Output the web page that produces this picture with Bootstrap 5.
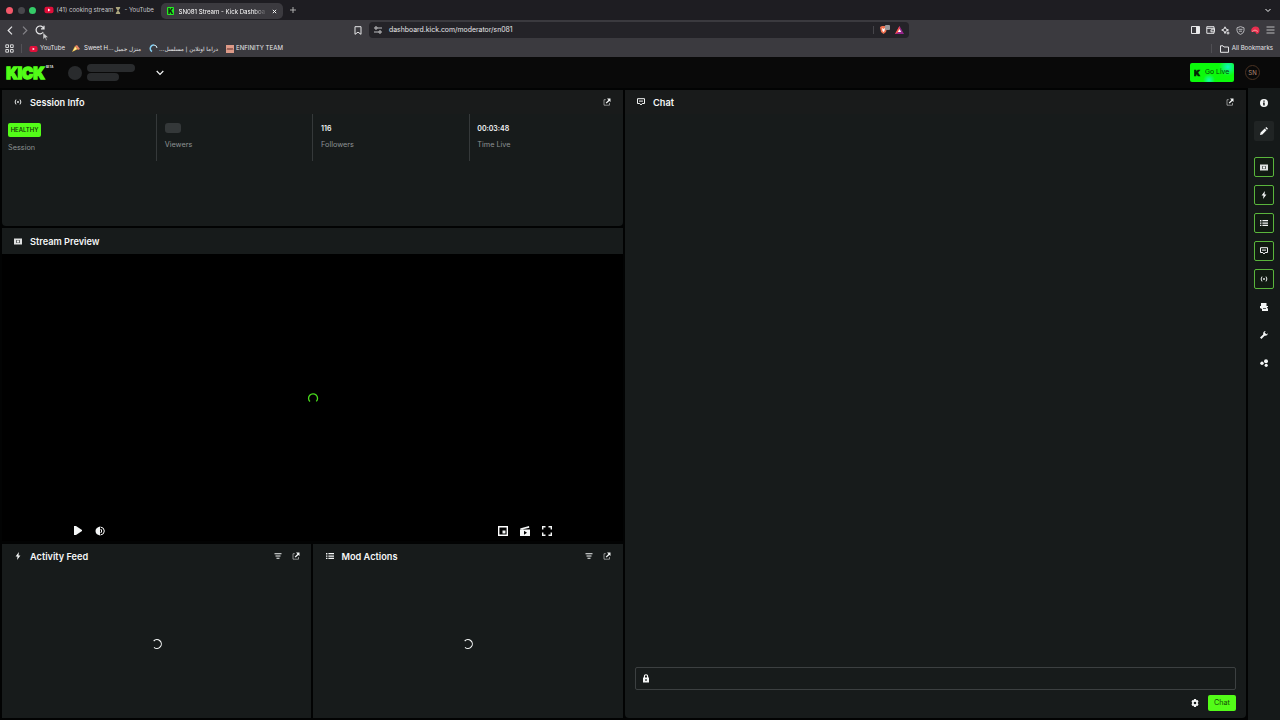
<!DOCTYPE html>
<html lang="en" data-bs-theme="dark">
<head>
<meta charset="utf-8">
<meta name="viewport" content="width=device-width, initial-scale=1">
<title>SN081 Stream - Kick Dashboard</title>
<link href="https://cdn.jsdelivr.net/npm/bootstrap@5.3.0/dist/css/bootstrap.min.css" rel="stylesheet">
<style>
body{width:1280px;height:720px;overflow:hidden;background:#020303;color:#f4f6f6;font:400 7px/1 Inter,"DejaVu Sans",sans-serif}
svg{display:block;flex:none;fill:currentColor}
.ln{fill:none;stroke:currentColor}
.txt{white-space:nowrap;flex:none}
.tabs{height:20px;background:#1e1d22;padding-left:6px}
.dot{width:7px;height:7px;margin-right:4.5px;flex:none}
.tab-on{width:122px;height:16px;margin-top:2px;background:#3b3a3f;border-radius:5px;padding:0 6px;flex:none}
.tab-name{width:88px;line-height:9px;margin-left:4px;font-size:6.1px;overflow:hidden;-webkit-mask-image:linear-gradient(90deg,#000 85%,transparent)}
.tools{height:37px;background:#3b3a3f;color:#e6e6e8}
.tools-nav{height:20px;padding:0 5px 0 6px}
.marks{height:17px;padding:0 7px 0 5px;font-size:6.1px}
.marks .arab{font:5.7px "DejaVu Sans",sans-serif}
.addr{width:540px;height:16px;background:#242328;border-radius:4px;padding:0 5px;margin-left:7px}
.kickbar{height:31px;background:#090909;padding:0 20px 0 5px}
.skel{background:#292b2d}
.golive{width:44px;height:19px;border-radius:2px;color:#063b06;background:radial-gradient(circle at 19px 17px,#13f7b0 0,transparent 6px),radial-gradient(circle at 38px 4px,#10f5c0 0,transparent 9px),#0bfa0b;padding-left:4px}
.avatar{width:15px;height:15px;border:1px solid #4a3222;color:#b58c76;font-size:6px}
.work{height:632px;padding:2px 0 2px 2px}
.pane{background:#171b1b}
.pane-top{height:24px;padding:0 12px;flex:none}
.pane-top .ttl{font-weight:600;font-size:9.2px;margin-left:8px;padding-top:1px}
.stats>div{width:156.3px;flex:none;height:47px;padding-left:7.7px;border-right:1px solid #35393a}
.stats>div:first-child{width:155px;padding-left:6px}
.stats>div:last-child{border:0;width:153px}
.stats b{font-size:7px;font-weight:600;display:block;height:8px;margin-top:11px}
.stats span.lab{display:block;font-size:7.3px;color:#8d9293;margin-top:7.5px}
.healthy{width:33px;height:14px;margin-top:8.5px;background:#53fc18;color:#102b08;border-radius:2px;font-size:6px;font-weight:500}
.inputbox{height:23px;border:1px solid #3c4041;border-radius:2px;padding-left:6px;margin:0 10px}
.sendbtn{width:28px;height:16px;background:#53fc18;color:#154a08;border-radius:2px;font-size:7.2px}
.rail{width:32px;background:#151919;margin-top:-2px;margin-bottom:-2px;padding-top:5px}
.rail .cell{width:20px;height:20px;border-radius:2px;margin-bottom:8px}
.rail .on{border:1px solid #5ab53c;background:#111a12}
.cursor-arrow{position:absolute;left:42px;top:12px}
</style>
</head>
<body class="d-flex flex-column">
<svg class="d-none">
 <symbol id="pop" viewBox="0 0 8 8"><path d="M4 .5h3.500V4L6.400 2.900 3.600 5.600l-.9-.9 2.700-2.800z"/><path d="M2.800 1.700H1v5.500h5.500V5" fill="none" stroke="currentColor" stroke-width=".8" opacity=".65"/></symbol>
 <symbol id="live" viewBox="0 0 10 8"><circle cx="5" cy="4" r="1.100"/><path d="M2.500 1Q.2 4 2.500 7M7.500 1q2.300 3 0 6" fill="none" stroke="currentColor" stroke-width="1.200"/></symbol>
 <symbol id="film" viewBox="0 0 8 7"><path fill-rule="evenodd" d="M0 .5h8v6H0zM2 2v3h4V2z" opacity=".9"/><path d="M3 2.600h2v1.800H3z"/><path d="M2 2h4v3H2z" opacity=".35"/></symbol>
 <symbol id="talk" viewBox="0 0 8 8"><path d="M.5.700h7v4.800H5.200L4 7 2.800 5.500H.5z" fill="none" stroke="currentColor"/><path d="M2 2.600h4v1H2z"/></symbol>
 <symbol id="bolt" viewBox="0 0 8 8"><path d="M4.900 0 1.600 4.400h1.900L3.100 8l3.300-4.600H4.500z"/></symbol>
 <symbol id="list" viewBox="0 0 8 8"><path d="M0 1h1.400v1.400H0zM2.400 1H8v1.300H2.400zM0 3.400h1.400v1.300H0zM2.400 3.400H8v1.300H2.400zM0 5.800h1.400v1.300H0zM2.400 5.800H8v1.300H2.400z"/></symbol>
 <symbol id="sift" viewBox="0 0 8 8"><path d="M.5 1.200h7v1h-7zM1.500 3.500h5v1h-5zM2.500 5.800h3v1h-3z"/></symbol>
 <symbol id="yt" viewBox="0 0 10 8"><rect width="9" height="6.500" x=".5" y=".75" rx="2" fill="#e00f3a"/><path d="M4 2.500v3L6.500 4z" fill="#fff"/></symbol>
</svg>

<div class="tabs d-flex align-items-center">
 <span class="dot rounded-circle" style="background:#f4586a"></span><span class="dot rounded-circle" style="background:#48474c"></span><span class="dot rounded-circle" style="background:#35cb68"></span>
 <svg width="10" height="8" style="margin-left:3px"><use href="#yt"/></svg>
 <span class="txt d-flex align-items-center" style="width:104px;margin-left:3px;padding-top:1px;font-size:6.100px;color:#c7c7ca">(41) cooking stream
  <svg width="6" height="7" viewBox="0 0 7 8" style="margin:0 3px 0 2px"><path d="M1 0h5v1L4 4l2 3v1H1V7l2-3-2-3z" fill="#aaa47c"/></svg>- YouTube</span>
 <div class="tab-on d-flex align-items-center">
  <svg width="8" height="8" viewBox="0 0 8 8"><rect width="7" height="8" rx="1" fill="#24ef22"/><text x="1" y="6.600" font-size="7" font-weight="900" fill="#102210">K</text></svg>
  <span class="txt tab-name text-white">SN081 Stream - Kick Dashboa</span>
  <svg class="ln" width="5" height="5" viewBox="0 0 6 6" style="margin-left:5px"><path d="M1 1l4 4M5 1 1 5" stroke-width="1.200"/></svg>
 </div>
 <svg class="ln" width="6" height="6" viewBox="0 0 6 6" style="margin-left:7px"><path d="M3 0v6M0 3h6" stroke="#bbb" stroke-width=".9"/></svg>
 <svg class="ln ms-auto" width="6" height="5" viewBox="0 0 6 5" style="margin-right:9px"><path d="m.5 1 2.500 2.500L5.500 1"/></svg>
</div>

<div class="tools position-relative">
 <div class="tools-nav d-flex align-items-center">
  <svg class="ln" width="8" height="9" viewBox="0 0 8 9"><path d="M6 .7 2.200 4.500 6 8.300" stroke-width="1.200"/></svg>
  <svg class="ln" width="8" height="9" viewBox="0 0 8 9" style="margin-left:7px;color:#858489"><path d="M2 .7 5.800 4.500 2 8.300" stroke-width="1.200"/></svg>
  <svg class="ln" width="10" height="10" viewBox="0 0 10 10" style="margin-left:6px"><path d="M8.300 7A3.900 3.900 0 1 1 8.600 3.400M9 .8v3H6" stroke-width="1.200"/></svg>
  <svg class="ln" width="8" height="9" viewBox="0 0 8 9" style="margin-left:309px"><path d="M1 .7h6v7.600L4 6.200 1 8.300z"/></svg>
  <div class="addr d-flex align-items-center">
   <svg class="ln" width="8" height="8" viewBox="0 0 8 8"><path d="M3.500 2H8M0 6h4.500" stroke-width=".8"/><circle cx="2" cy="2" r="1.200" stroke-width=".9"/><circle cx="6" cy="6" r="1.200" stroke-width=".9"/></svg>
   <span class="txt" style="margin-left:7px;padding-top:1px;font-size:6.900px">dashboard.kick.com/moderator/sn081</span>
   <span class="ms-auto" style="width:1px;height:8px;background:#46454a"></span>
   <svg width="11" height="10" viewBox="0 0 11 10" style="margin-left:5px"><path d="M1 2 3 1h3l2 2-1 4-2.500 2L2 7z" fill="#ee704f"/><path d="m3 3 1.500 1L6 3 5.500 6l-1 1-1-1z" fill="#fff"/><rect x="6" width="5" height="5" rx="1" fill="#98999c"/></svg>
   <svg width="9" height="8" viewBox="0 0 9 8" style="margin-left:5px"><path d="M4.500 0 9 8H0z" fill="#98258c"/><path d="M4.500 0 0 8l4.500-2.500z" fill="#ff563e"/><path d="m4.500 3 1.700 3H2.800z" fill="#fff"/></svg>
  </div>
  <div class="ms-auto d-flex align-items-center" style="gap:6px">
   <svg class="ln" width="9" height="8" viewBox="0 0 9 8"><path d="M.5.500h8v7h-8z"/><path d="M5.500 1H8v6H5.500z" fill="#eee"/></svg>
   <svg class="ln" width="9" height="8" viewBox="0 0 9 8"><path d="M8 2.500V.7H.8v6.600H8V6M.8 2.300h7.700v3.500H5V3.800h3.500"/></svg>
   <svg class="ln" width="9" height="9" viewBox="0 0 9 9"><path d="M4 .8 5 3l2.500 1L5 5 4 7.500 3 5 .7 4 3 3zM7 5.500v3M5.500 7h3"/></svg>
   <svg class="ln" width="9" height="9" viewBox="0 0 9 9"><path d="M4.500.6 8 1.800v3Q7.500 7.500 4.500 8.400 1.500 7.500 1 4.800v-3z" stroke="#b6b6ba"/><path d="M2.500 3.300h4M3 5.200h3" stroke="#b6b6ba"/></svg>
   <svg width="9" height="9" viewBox="0 0 9 9"><path d="M.5 6A4 4 0 0 1 4.500.5Q8.700.7 8.500 5 8 8 5.500 8 5 5 .5 6" fill="#e82f4f"/><path d="M1 5.500q3-3 6 0" stroke="#ffb4ac" stroke-width=".8" fill="none"/></svg>
   <svg class="ln" width="9" height="8" viewBox="0 0 9 8"><path d="M.5 1h8M.5 4h8M.5 7h8" stroke="#b9b9bc" stroke-width="1.200"/></svg>
  </div>
 </div>
 <div class="marks d-flex align-items-center">
  <svg class="ln" width="9" height="9" viewBox="0 0 9 9"><path d="M.8.800h2.700v2.700H.8zM5.500.800h2.700v2.700H5.500zM.8 5.500h2.700v2.700H.8zM5.500 5.500h2.700v2.700H5.500z" stroke-width=".9"/></svg>
  <span style="width:1px;height:9px;background:#535257;margin-left:7px"></span>
  <svg width="9" height="8" viewBox="0 0 10 8" style="margin-left:7px"><use href="#yt"/></svg>
  <span class="txt" style="margin-left:2px;width:32px">YouTube</span>
  <svg width="9" height="9" viewBox="0 0 9 9"><path d="M0 8 3 2l3 3z" fill="#f1c044"/><path d="m3 2 2-1 3 4-2 1z" fill="#e98563"/><path d="M1 7 3.500 3l1 2z" fill="#fff0a5"/></svg>
  <span class="txt" style="margin-left:3px;width:30px">Sweet H...</span>
  <span class="txt arab" dir="rtl" style="width:27px">منزل جميل</span>
  <svg class="ln" width="9" height="9" viewBox="0 0 9 9" style="margin-left:8px"><path d="M5 1A3.500 3.500 0 0 0 3 7.500" stroke="#84cdf0" stroke-width="1.500"/><path d="M5 1q3 .5 3 3" stroke="#d6eff7"/></svg>
  <span class="txt arab" dir="rtl" style="margin-left:5px;width:55px">دراما اونلاين | مسلسل...</span>
  <svg width="8" height="8" viewBox="0 0 8 8" style="margin-left:8px"><rect width="8" height="8" fill="#de9a88"/><path d="m1 5 1-2 1 2 1-2 1 2 1-2 1 2" fill="none" stroke="#713c37" stroke-width=".7"/></svg>
  <span class="txt" style="margin-left:2px">ENFINITY TEAM</span>
  <span class="ms-auto" style="width:1px;height:9px;background:#504f54"></span>
  <svg class="ln" width="9" height="8" viewBox="0 0 9 8" style="margin-left:8px"><path d="M.5 7.300V.8H3l1 1.200h4.500v5.300z"/></svg>
  <span class="txt" style="margin-left:3px">All Bookmarks</span>
 </div>
 <svg class="cursor-arrow" width="7" height="9" viewBox="0 0 7 9"><path d="M1 .5v7l2-1.700 1 2.700 1.200-.5-1-2.500h2.300z" fill="#c9c9cb" stroke="#303033" stroke-width=".5"/></svg>
</div>

<div class="kickbar d-flex align-items-center">
 <svg width="41" height="18" viewBox="0 0 41 18"><text x="1.300" y="15" font-family="Inter" font-weight="900" font-size="16.500" fill="#53fc18" stroke="#53fc18" stroke-width="1.500" textLength="38.500" lengthAdjust="spacingAndGlyphs">KICK</text></svg>
 <span class="txt fw-bold" style="font-size:2.800px;width:9px;margin-top:-11px">BETA</span>
 <span class="skel rounded-circle flex-shrink-0" style="width:14px;height:14px;margin-left:13px"></span>
 <div style="width:48px;margin-left:5px"><div class="skel rounded-pill" style="height:8px;margin-bottom:1.500px"></div><div class="skel rounded-pill" style="height:8px;width:32px"></div></div>
 <svg class="ln" width="8" height="6" viewBox="0 0 8 6" style="margin-left:21px"><path d="m.7 1 3.300 3.500L7.300 1" stroke-width="1.200"/></svg>
 <div class="golive ms-auto d-flex align-items-center"><svg width="7" height="8" viewBox="0 0 7 8"><text y="7" font-size="8" font-weight="900" fill="#042204" stroke="#042204" stroke-width=".6">K</text></svg><span class="txt" style="margin-left:4px;font-size:6.800px">Go Live</span></div>
 <span class="avatar rounded-circle d-flex align-items-center justify-content-center" style="margin-left:11px">SN</span>
</div>

<main class="work d-flex">
 <div class="d-flex flex-column" style="width:621px">
  <section class="pane rounded-1" style="height:136px;margin-bottom:2px">
   <div class="pane-top d-flex align-items-center" style="background:#191b1b"><svg width="8" height="8"><use href="#live"/></svg><span class="ttl">Session Info</span><svg class="ms-auto" width="8" height="8"><use href="#pop"/></svg></div>
   <div class="stats d-flex">
    <div><div class="healthy d-flex align-items-center justify-content-center">HEALTHY</div><span class="lab" style="margin-top:7px">Session</span></div>
    <div><div style="width:16px;height:10px;border-radius:3px;background:#343839;margin-top:9px"></div><span class="lab">Viewers</span></div>
    <div><b>116</b><span class="lab">Followers</span></div>
    <div><b>00:03:48</b><span class="lab">Time Live</span></div>
   </div>
  </section>
  <section class="bg-black" style="height:313px;margin-bottom:3px">
   <div class="pane pane-top d-flex align-items-center" style="height:26px"><svg width="8" height="7"><use href="#film"/></svg><span class="ttl">Stream Preview</span></div>
   <div class="d-flex justify-content-center" style="height:270px;padding-top:137.500px"><svg class="ln" width="12" height="12" viewBox="0 0 12 12"><path d="M3 9.600A4.500 4.500 0 1 1 9.300 9.400" stroke="#48dc1c" stroke-width="1.300"/></svg></div>
   <div class="d-flex align-items-center" style="height:13px;padding:0 71px 0 72px">
    <svg width="8" height="9" viewBox="0 0 8 9"><path d="M0 0h2l6 4v1L2 9H0z"/></svg>
    <svg width="10" height="10" viewBox="0 0 10 10" style="margin-left:13px"><path d="M5 .5v9Q.5 8.500.5 5T5 .5z"/><path d="M5.500 1q3.800.5 3.800 4T5.500 9M5.800 3q1.800 2 0 4" fill="none" stroke="#fff"/></svg>
    <svg class="ms-auto" width="10" height="10" viewBox="0 0 10 10"><path d="M.7.700h8.600v8.600H.7z" fill="none" stroke="#fff" stroke-width="1.400"/><path d="M4.500 4.500h3v3h-3z"/></svg>
    <svg width="10" height="10" viewBox="0 0 10 10" style="margin-left:12px"><path fill-rule="evenodd" d="M0 3.500h10V10H0zm4 1.300v4l3-2zM0 2.500 9 .1l.3 1.600L1 3.800z"/></svg>
    <svg class="ln" width="10" height="10" viewBox="0 0 10 10" style="margin-left:12px"><path d="M.7 3.500V.7h2.800M6.500.7h2.800v2.800M9.300 6.500v2.800H6.500M3.500 9.300H.7V6.500" stroke-width="1.400"/></svg>
   </div>
  </section>
  <div class="d-flex" style="height:174px;gap:2px">
   <section class="pane d-flex flex-column" style="width:309px"><div class="pane-top d-flex align-items-center" style="padding-right:11px"><svg width="8" height="8"><use href="#bolt"/></svg><span class="ttl">Activity Feed</span><svg class="ms-auto" width="8" height="8"><use href="#sift"/></svg><svg width="8" height="8" style="margin-left:10px"><use href="#pop"/></svg></div>
    <div class="d-flex justify-content-center" style="padding-top:70px"><svg class="ln" width="12" height="12" viewBox="0 0 12 12"><path d="M2.700 3A4.400 4.400 0 1 1 3 9.300" stroke-width="1.100"/></svg></div></section>
   <section class="pane d-flex flex-column" style="width:310px"><div class="pane-top d-flex align-items-center"><svg width="8" height="8" style="margin-left:.5px"><use href="#list"/></svg><span class="ttl">Mod Actions</span><svg class="ms-auto" width="8" height="8"><use href="#sift"/></svg><svg width="8" height="8" style="margin-left:10px"><use href="#pop"/></svg></div>
    <div class="d-flex justify-content-center" style="padding-top:70px"><svg class="ln" width="12" height="12" viewBox="0 0 12 12"><path d="M2.700 3A4.400 4.400 0 1 1 3 9.300" stroke-width="1.100"/></svg></div></section>
  </div>
 </div>
 <section class="pane rounded-1 d-flex flex-column" style="width:621px;margin-left:2px">
  <div class="pane-top d-flex align-items-center" style="background:#191b1b"><svg width="8" height="8"><use href="#talk"/></svg><span class="ttl">Chat</span><svg class="ms-auto" width="8" height="8"><use href="#pop"/></svg></div>
  <div class="mt-auto inputbox d-flex align-items-center"><svg width="8" height="9" viewBox="0 0 8 9"><path fill-rule="evenodd" d="M1 3.500h6V8.500H1zM3.400 5v2h1.200V5z"/><path d="M2.400 4V2.400q0-1.600 1.600-1.600t1.600 1.600V4" fill="none" stroke="#fff" stroke-width="1.100"/></svg></div>
  <div class="d-flex align-items-center justify-content-end" style="height:28px;padding:0 10px 2px;gap:9px">
   <svg width="8" height="8" viewBox="0 0 8 8"><path fill-rule="evenodd" d="M3 0h2l.3 1.200 1.200-.3 1 1.700L6.700 4l.8 1.400-1 1.700-1.200-.3L5 8H3l-.3-1.200-1.200.3-1-1.700L1.300 4 .5 2.600l1-1.700 1.200.3zM4 2.700a1.300 1.300 0 1 0 0 2.600 1.300 1.300 0 0 0 0-2.600z"/></svg>
   <span class="sendbtn d-flex align-items-center justify-content-center">Chat</span>
  </div>
 </section>
 <aside class="rail d-flex flex-column align-items-center" style="margin-left:2px">
  <div class="cell d-flex align-items-center justify-content-center" style="margin-top:-.5px"><svg width="8" height="8" viewBox="0 0 8 8"><path fill-rule="evenodd" d="M4 0a4 4 0 1 0 0 8 4 4 0 0 0 0-8zM3.300 1.500h1.400v1.300H3.300zM3 3.500h1.700v3H3.300z"/></svg></div>
  <div class="cell d-flex align-items-center justify-content-center" style="background:#202424;margin-bottom:16.500px"><svg width="8" height="8" viewBox="0 0 8 8"><path d="m0 8 .6-2.400L4.700 1.500l1.800 1.800-4.100 4.100zM5.300 1 6.300 0 8 1.700l-1 1z"/></svg></div>
  <div class="cell on d-flex align-items-center justify-content-center"><svg width="8" height="7"><use href="#film"/></svg></div>
  <div class="cell on d-flex align-items-center justify-content-center"><svg width="8" height="8"><use href="#bolt"/></svg></div>
  <div class="cell on d-flex align-items-center justify-content-center"><svg width="8" height="8"><use href="#list"/></svg></div>
  <div class="cell on d-flex align-items-center justify-content-center"><svg width="8" height="8"><use href="#talk"/></svg></div>
  <div class="cell on d-flex align-items-center justify-content-center"><svg width="8" height="8"><use href="#live"/></svg></div>
  <div class="cell d-flex align-items-center justify-content-center"><svg width="8" height="8" viewBox="0 0 8 8"><path d="M1 0h5.500v3H8v1H6.800L8 6v2H2V6L0 5V3h1z"/><path d="M3 5.200h3v.8H3z" fill="#34393a"/></svg></div>
  <div class="cell d-flex align-items-center justify-content-center"><svg width="8" height="8" viewBox="0 0 8 8"><path d="m0 6.600 3.200-3.200Q2.700.4 5.800 0L4.600 1.600l1.700 1.700L8 2.200Q7.500 5.200 4.600 4.800L1.400 8z"/></svg></div>
  <div class="cell d-flex align-items-center justify-content-center"><svg width="9" height="8" viewBox="0 0 9 8"><circle cx="6" cy="2.200" r="2"/><circle cx="2" cy="4.300" r="1.700"/><circle cx="6.200" cy="6.300" r="1.600"/></svg></div>
 </aside>
</main>
</body>
</html>
